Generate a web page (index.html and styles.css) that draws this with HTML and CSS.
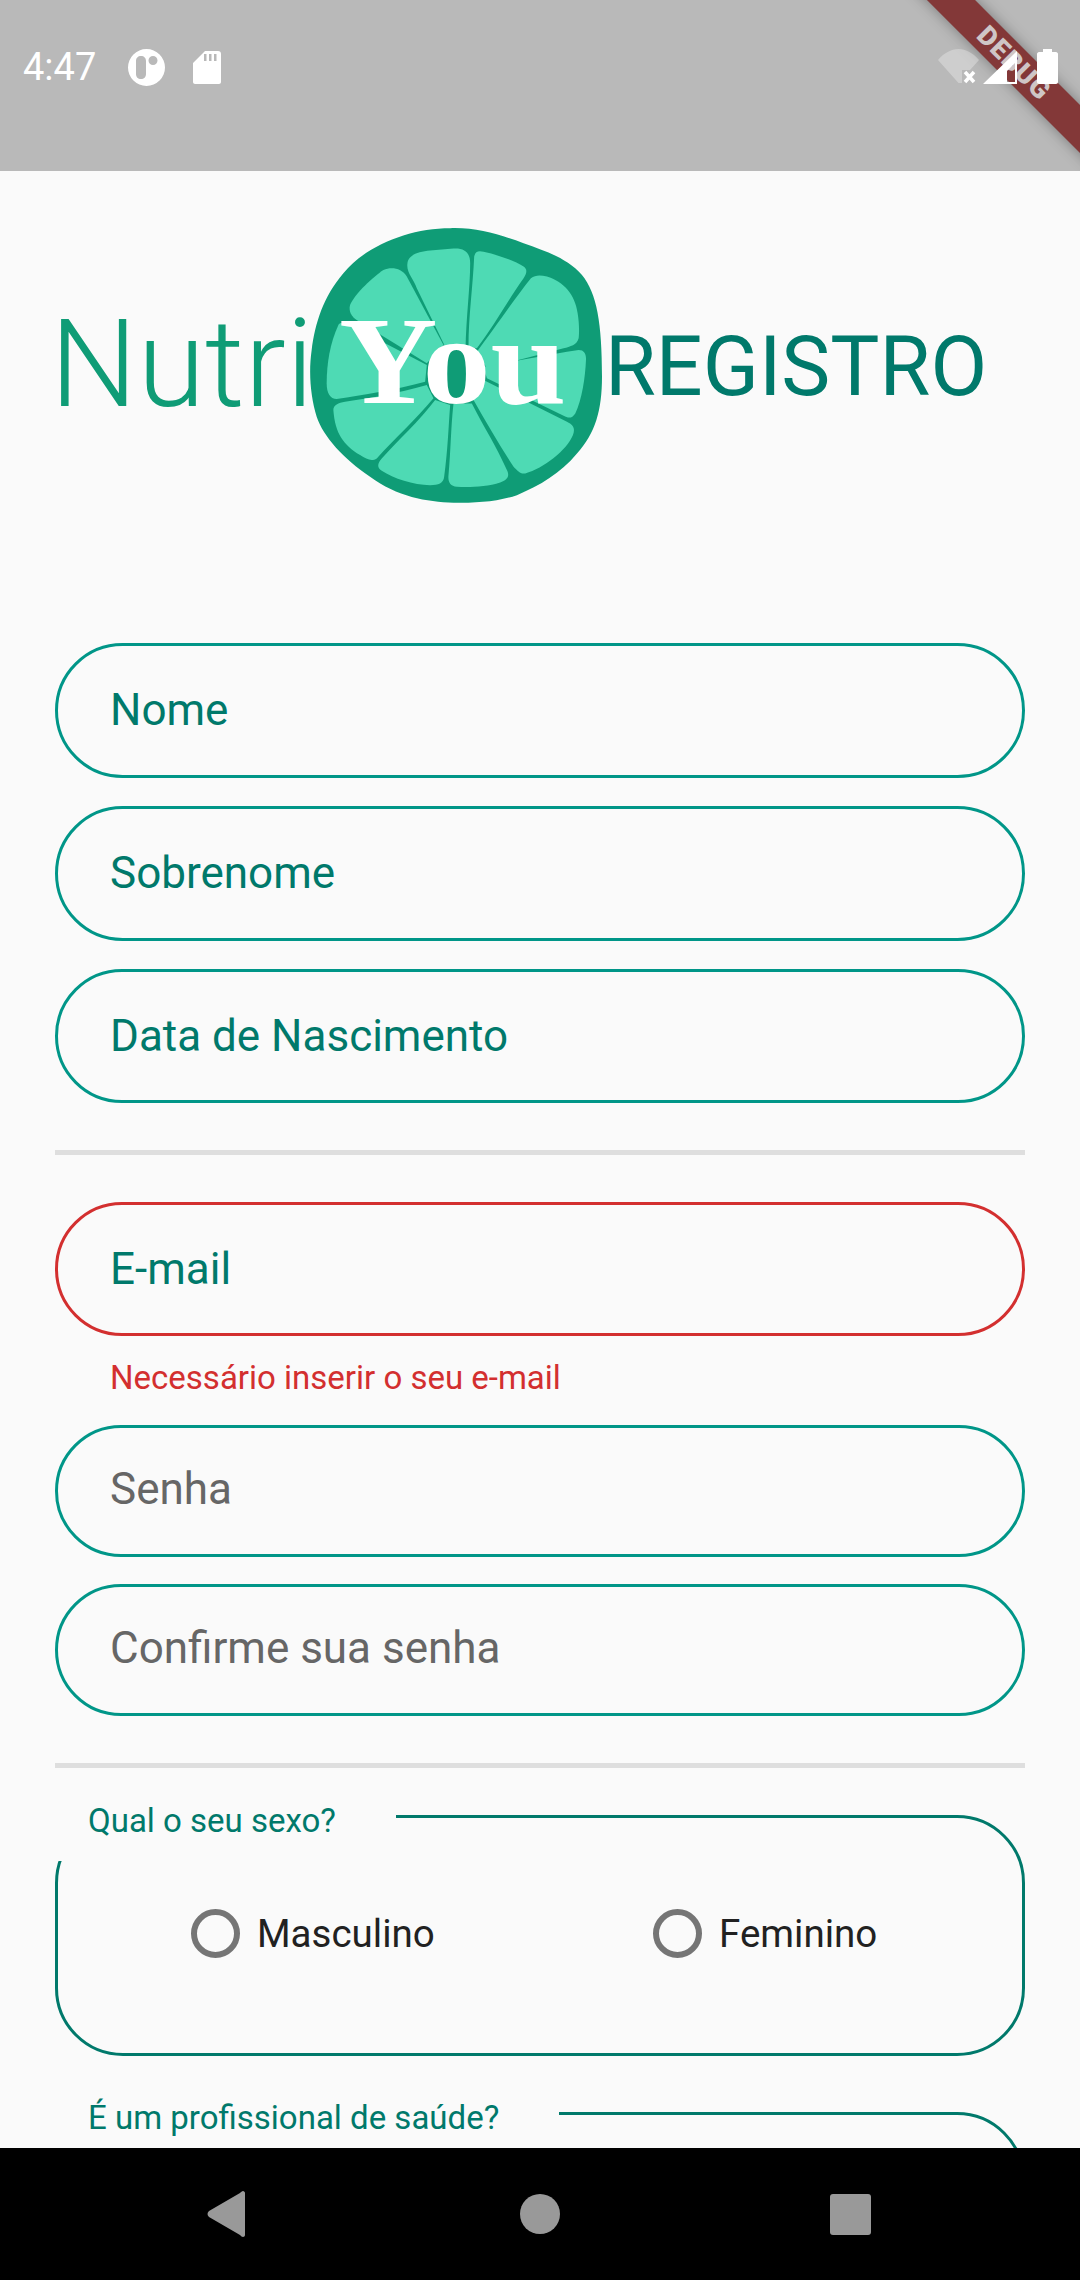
FILE: index.html
```html
<!DOCTYPE html>
<html lang="en">

<head>
    <meta charset="UTF-8">
    <meta name="viewport" content="width=device-width, initial-scale=1.0">
    <title>NutriYou Registro</title>
    <link rel="stylesheet" href="styles.css">
</head>

<body>

    <div class="status-bar">
        <div class="debug-banner"><span>DEBUG</span></div>
        <div class="status-left">
            <span class="clock">4:47</span>
            <svg class="icon-circle" viewBox="0 0 37 37">
                <path fill="#fff" fill-rule="evenodd" d="M18.5 0a18.500 18.500 0 1 0 0 37a18.500 18.500 0 1 0 0-37zM13 7c3 0 5 2 5 5v13c0 3-2 5-5 5s-5-2-5-5V12c0-3 2-5 5-5zM25 7a4.500 4.500 0 1 1 0 9a4.500 4.500 0 1 1 0-9z" />
            </svg>
            <svg class="icon-sd" viewBox="0 0 28 33">
                <path fill="#fff" fill-rule="evenodd" d="M12 0H25c2 0 3 1 3 3V31c0 1-1 2-2 2H2c-1 0-2-1-2-2V12zM11 3v7h2.500V3zM16 3v7h2.500V3zM21 3v7h2.500V3z" />
            </svg>
        </div>
        <div class="status-right">
            <svg class="icon-wifi" viewBox="0 0 47 35">
                <path fill="#fff" opacity="0.3" d="M0 11C6 4 13 0 20.500 0S35 4 41 11L32 21H24V34H20.500z" />
                <path stroke="#fff" stroke-width="3.500" d="M27 23l9 10M36 23l-9 10" />
            </svg>
            <svg class="icon-signal" viewBox="0 0 35 33">
                <path fill="#fff" fill-rule="evenodd" d="M34 0V33H0zM32 12L24 20V31H32z" />
            </svg>
            <svg class="icon-battery" viewBox="0 0 21 35">
                <path fill="#fff" d="M6 0h9v3h4c1 0 2 1 2 2v28c0 1-1 2-2 2H2c-1 0-2-1-2-2V5c0-1 1-2 2-2h4z" />
            </svg>
        </div>
    </div>

    <div class="content">
        <div class="header">
            <span class="brand">Nutri</span>
            <div class="logo">
                <svg viewBox="90 55 875 823">
                    <path fill="#0f9c76" d="M510 55C590 52 660 75 730 100C800 125 860 145 905 195C950 250 965 340 965 500C965 600 945 670 890 730C840 790 780 825 710 855C650 875 590 878 520 878C440 875 350 860 270 800C190 745 130 680 110 620C92 560 85 490 95 420C105 340 130 260 190 190C260 105 390 55 510 55Z" />
                    <g fill="#4edab4">
                        <path d="M382 160C385 135 415 125 450 122L520 116C555 114 570 130 570 160C570 230 558 320 556 420L500 420L410 235C400 205 378 190 382 160Z" />
                        <path d="M582 140C585 125 595 122 610 126C650 135 700 150 730 170C742 178 740 190 730 205C690 260 640 350 590 415L565 410C565 320 578 230 582 140Z" />
                        <path d="M752 205C765 195 780 195 800 200C850 215 885 255 892 310C897 340 897 370 895 385C890 405 870 410 850 415L620 475L590 425C640 360 700 270 752 205Z" />
                        <path d="M860 425L895 420C912 420 918 432 917 450C915 500 905 570 885 610C875 625 865 625 850 617L620 505L610 470Z" />
                        <path d="M610 510L860 635C880 645 885 655 878 675C860 720 790 775 735 790C720 793 710 780 700 770C660 710 620 640 580 570Z" />
                        <path d="M520 580L575 580C610 650 650 710 680 780C690 800 680 810 660 817C620 830 570 832 530 830C510 828 503 815 505 795C512 720 512 650 520 580Z" />
                        <path d="M465 570L510 585C505 650 503 720 492 800C490 820 475 825 450 825C400 825 340 805 305 782C290 772 292 760 305 745C350 695 420 630 465 570Z" />
                        <path d="M160 600C160 585 175 578 195 575C270 565 350 550 440 525L460 565C410 625 340 690 290 745C275 755 260 748 240 735C190 705 165 670 160 600Z" />
                        <path d="M175 345C180 335 195 340 210 345L440 465L435 515C340 540 250 555 170 567C150 567 140 550 140 520C140 460 150 400 175 345Z" />
                        <path d="M210 285C225 250 280 200 310 180C335 170 365 175 380 200L490 405L440 460L230 330C215 320 205 305 210 285Z" />
                    </g>
                </svg>
                <span class="logo-you">You</span>
            </div>
            <span class="page-title">REGISTRO</span>
        </div>

        <div class="field-group">
            <div class="field tall">Nome</div>
            <div class="field tall">Sobrenome</div>
            <div class="field tall">Data de Nascimento</div>
        </div>

        <div class="divider first"></div>

        <div class="field tall error">E-mail</div>
        <div class="error-text">Necessário inserir o seu e-mail</div>

        <div class="field-group narrow">
            <div class="field hint">Senha</div>
            <div class="field hint">Confirme sua senha</div>
        </div>

        <div class="divider second"></div>

        <div class="choice-box">
            <div class="choice-label">Qual o seu sexo?</div>
            <div class="choice-options">
                <div class="radio-option"><span class="radio"></span>Masculino</div>
                <div class="radio-option"><span class="radio"></span>Feminino</div>
            </div>
        </div>

        <div class="choice-box next">
            <div class="choice-label">É um profissional de saúde?</div>
        </div>
    </div>

    <div class="nav-bar">
        <svg class="nav-back" viewBox="0 0 38 46">
            <path fill="#999" d="M36 0C37 0 38 1 38 2V44C38 45 37 46 36 46C35 46 34 45 33 44L2 26C0 24 0 22 2 20L33 2C34 1 35 0 36 0Z" />
        </svg>
        <span class="nav-home"></span>
        <span class="nav-recent"></span>
    </div>

</body>

</html>
```

FILE: styles.css
```css
* {
    box-sizing: border-box;
}

body {
    font-family: 'Roboto', sans-serif;
    background-color: #fafafa;
    margin: 0;
    padding: 0;
    width: 1080px;
    height: 2280px;
    display: flex;
    flex-direction: column;
    overflow: hidden;
}

/* status bar */
.status-bar {
    height: 171px;
    flex-shrink: 0;
    background-color: #b9b9b9;
    position: relative;
    overflow: hidden;
    display: flex;
    justify-content: space-between;
    align-items: flex-start;
}

.status-left {
    display: flex;
    align-items: center;
    position: relative;
    padding: 48px 0 0 23px;
}

.clock {
    color: #fff;
    font-size: 38px;
    line-height: 38px;
    width: 105px;
}

.icon-circle {
    width: 37px;
    height: 37px;
    margin-right: 28px;
}

.icon-sd {
    width: 28px;
    height: 33px;
}

.status-right {
    display: flex;
    align-items: flex-end;
    position: relative;
    padding: 49px 22px 0 0;
}

.icon-wifi {
    width: 47px;
    height: 35px;
}

.icon-signal {
    width: 35px;
    height: 33px;
    margin: 0 19px 0 -2px;
}

.icon-battery {
    width: 21px;
    height: 35px;
}

.debug-banner {
    position: absolute;
    left: 864px;
    top: 46px;
    width: 300px;
    height: 34px;
    background-color: #833838;
    box-shadow: 0 0 14px rgba(0, 0, 0, 0.35);
    transform: rotate(45deg);
    display: flex;
    align-items: center;
    justify-content: center;
}

.debug-banner span {
    color: #cfc6c6;
    font-size: 27px;
    font-weight: 900;
    letter-spacing: 1px;
}

/* header */
.content {
    flex: 1;
    min-height: 0;
    overflow: hidden;
    padding: 0 55px;
}

.header {
    display: flex;
    align-items: center;
    margin: 57px 0 140px;
    height: 275px;
}

.brand {
    color: #0f9c76;
    font-size: 123px;
    font-weight: 300;
    line-height: 130px;
    width: 255px;
    flex-shrink: 0;
    margin-left: -5px;
    margin-right: 5px;
    padding-bottom: 4px;
    white-space: nowrap;
}

.logo {
    position: relative;
    width: 292px;
    height: 275px;
    flex-shrink: 0;
}

.logo svg {
    display: block;
    width: 292px;
    height: 275px;
}

.logo-you {
    position: absolute;
    left: 29px;
    top: 69px;
    color: #fff;
    font-family: 'Liberation Serif', serif;
    font-size: 124px;
    font-weight: 700;
    line-height: 130px;
    transform: scaleX(1.1);
    transform-origin: left center;
}

.page-title {
    color: #00796b;
    font-size: 82.5px;
    margin-left: 3px;
    padding-top: 2px;
    white-space: nowrap;
}

/* form */
.field-group {
    display: flex;
    flex-direction: column;
    gap: 28px;
}

.field-group.narrow {
    gap: 27px;
}

.field {
    height: 132px;
    border: 3px solid #009688;
    border-radius: 68px;
    padding-left: 52px;
    display: flex;
    align-items: center;
    font-size: 44px;
    color: #00796b;
}

.field.tall {
    height: 134.75px;
}

.field.error {
    height: 134px;
    border-color: #d32f2f;
}

.field.hint {
    color: #666;
    padding-bottom: 4px;
}

.error-text {
    color: #d32f2f;
    font-size: 33px;
    line-height: 40px;
    padding: 22px 0 27px 55px;
}

.divider {
    height: 5px;
    background-color: #dedede;
}

.divider.first {
    margin: 47px 0 47px;
}

.divider.second {
    margin: 47px 0 47px;
}

/* choice boxes */
.choice-box {
    position: relative;
    height: 241px;
    border: 3px solid #00796b;
    border-radius: 68px;
}

.choice-box.next {
    margin-top: 56px;
}

.choice-label {
    position: absolute;
    left: -3px;
    top: -30px;
    height: 73px;
    padding: 13px 60px 0 33px;
    background-color: #fafafa;
    color: #00796b;
    font-size: 33px;
    line-height: 40px;
}

.choice-options {
    display: flex;
    padding: 91px 0 0 133px;
}

.radio-option {
    display: flex;
    align-items: center;
    width: 462px;
    flex-shrink: 0;
    font-size: 38.5px;
    color: #212121;
}

.radio {
    width: 49px;
    height: 49px;
    border: 6px solid #757575;
    border-radius: 50%;
    margin-right: 17px;
}

/* nav bar */
.nav-bar {
    height: 132px;
    flex-shrink: 0;
    background-color: #000;
    position: relative;
    display: flex;
    align-items: center;
    justify-content: space-between;
    padding: 0 209px 0 207px;
}

.nav-back {
    width: 38px;
    height: 46px;
}

.nav-home {
    width: 40px;
    height: 40px;
    margin-left: 5px;
    border-radius: 50%;
    background-color: #999;
}

.nav-recent {
    width: 41px;
    height: 41px;
    border-radius: 3px;
    background-color: #999;
}
```
